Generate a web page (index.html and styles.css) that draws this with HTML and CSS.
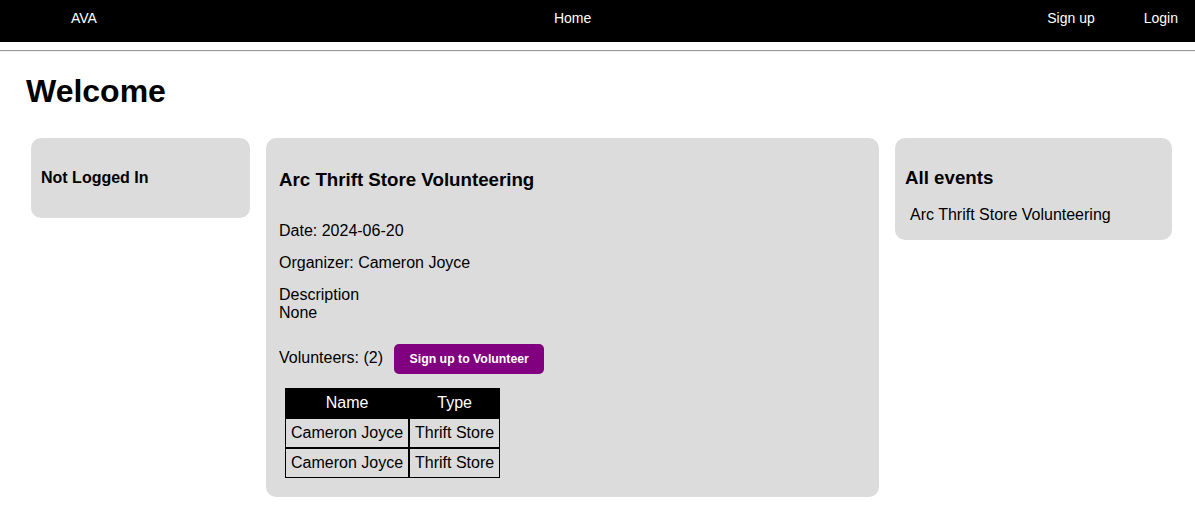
FILE: index.html
```html
<!DOCTYPE html>
<html lang="en">
<head>
<meta charset="utf-8">
<title>AVA</title>
<link rel="stylesheet" href="styles.css">
</head>
<body>
<nav class="topnav">
  <a class="nav-brand" href="#">AVA</a>
  <a class="nav-home" href="#">Home</a>
  <a class="nav-signup" href="#">Sign up</a>
  <a class="nav-login" href="#">Login</a>
</nav>
<hr class="divider">
<h1 class="welcome">Welcome</h1>
<main class="cards">
  <section class="card card-status">
    <h4 class="status-title">Not Logged In</h4>
  </section>
  <section class="card card-event">
    <h3 class="event-title">Arc Thrift Store Volunteering</h3>
    <p class="info">Date: 2024-06-20</p>
    <p class="info">Organizer: Cameron Joyce</p>
    <p class="info info-desc">Description<br>None</p>
    <div class="volunteer-row">
      <span class="volunteer-count">Volunteers: (2)</span>
      <button class="btn-volunteer" type="button">Sign up to Volunteer</button>
    </div>
    <table class="vol-table">
      <thead>
        <tr><th>Name</th><th>Type</th></tr>
      </thead>
      <tbody>
        <tr><td>Cameron Joyce</td><td>Thrift Store</td></tr>
        <tr><td>Cameron Joyce</td><td>Thrift Store</td></tr>
      </tbody>
    </table>
  </section>
  <section class="card card-list">
    <h3 class="list-title">All events</h3>
    <div class="list-item">Arc Thrift Store Volunteering</div>
  </section>
</main>
</body>
</html>
```

FILE: styles.css
```css
html, body {
  margin: 0;
  padding: 0;
  background: #ffffff;
}

body {
  font-family: "Liberation Sans", Arial, sans-serif;
  color: #000000;
}

.topnav {
  display: flex;
  align-items: flex-start;
  height: 42px;
  box-sizing: border-box;
  padding: 10px 17px 0 71px;
  background: #000000;
}

.topnav a {
  color: #ffffff;
  text-decoration: none;
  font-size: 14px;
  line-height: 16px;
}

.nav-home {
  margin-left: 457px;
}

.nav-signup {
  margin-left: auto;
}

.nav-login {
  margin-left: 49px;
}

.divider {
  margin: 8px 0 0;
  border: 0;
  border-top: 1px solid #9a9a9a;
  border-bottom: 1px solid #eeeeee;
  height: 0;
}

.welcome {
  margin: 21px 0 0 26px;
  font-size: 32px;
  line-height: 37px;
  font-weight: bold;
}

.cards {
  display: flex;
  align-items: flex-start;
  gap: 16px;
  padding: 28px 23px 0 31px;
}

.card {
  flex: none;
  background: #dcdcdc;
  border-radius: 10px;
  box-sizing: border-box;
}

.card-status {
  width: 219px;
  padding: 11px 10px 10px;
}

.status-title {
  margin: 20.3px 0;
  font-size: 16px;
  line-height: 18.4px;
  font-weight: bold;
}

.card-event {
  width: 613px;
  padding: 12px 13px 19px;
}

.event-title {
  margin: 18.7px 0 31.5px;
  font-size: 18.72px;
  line-height: 21.5px;
  font-weight: bold;
}

.info {
  margin: 0 0 13.6px;
  font-size: 16px;
  line-height: 18.4px;
}

.info-desc {
  margin-bottom: 21.5px;
}

.volunteer-row {
  display: flex;
  align-items: baseline;
  gap: 11px;
}

.volunteer-count {
  font-size: 16px;
  line-height: 18.4px;
}

.btn-volunteer {
  height: 30px;
  padding: 0 15.5px;
  border: 0;
  border-radius: 5px;
  background: #800080;
  color: #ffffff;
  font-family: "Liberation Sans", Arial, sans-serif;
  font-size: 12.3px;
  font-weight: bold;
}

.vol-table {
  margin: 14px 0 0 6px;
  border-collapse: separate;
  border-spacing: 0;
  font-size: 16px;
}

.vol-table th,
.vol-table td {
  border: 1px solid #000000;
  padding: 5px 5px;
  line-height: 18px;
  white-space: nowrap;
}

.vol-table th {
  background: #000000;
  color: #ffffff;
  font-weight: normal;
  text-align: center;
}

.vol-table td {
  text-align: left;
}

.card-list {
  width: 277px;
  padding: 10px 10px 11px;
}

.list-title {
  margin: 18.7px 0 17.6px;
  font-size: 18.72px;
  line-height: 21.5px;
  font-weight: bold;
}

.list-item {
  margin: 0 0 5px 5px;
  font-size: 16px;
  line-height: 18.4px;
}
```
